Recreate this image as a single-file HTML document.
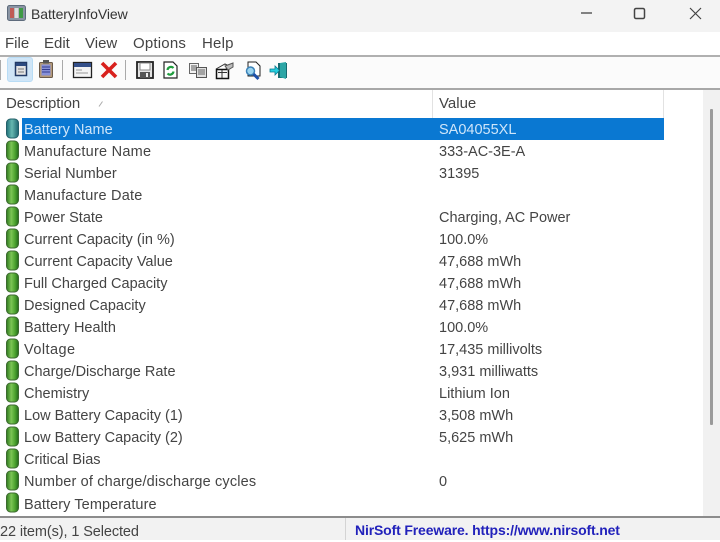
<!DOCTYPE html>
<html><head><meta charset="utf-8"><style>
*{box-sizing:border-box}
html,body{margin:0;padding:0}
body{width:720px;height:540px;position:relative;overflow:hidden;background:#fff;font-family:"Liberation Sans",sans-serif;color:#444;font-size:14.500px}
.a{position:absolute;white-space:nowrap}
.t{line-height:22px}
.m{top:35px;line-height:18px;font-size:15px;letter-spacing:.2px;color:#444}
svg{position:absolute;overflow:visible}
</style></head><body>
<div class="a" style="left:0;top:0;width:720px;height:32px;background:#f3f3f3"></div>
<svg style="left:7px;top:5px" width="19" height="16"><rect x=".5" y=".5" width="18" height="15" rx="2" fill="#8a94a3" stroke="#5e6b7c"/><rect x="3" y="3" width="4" height="10" fill="#c05a55"/><rect x="7.500" y="3" width="4" height="10" fill="#ddd"/><rect x="12" y="3" width="4" height="10" fill="#3f9a45"/></svg>
<div class="a" style="left:31px;top:5px;line-height:18px;font-size:14px;letter-spacing:-.08px;color:#333">BatteryInfoView</div>
<svg style="left:580px;top:8px" width="130" height="12" fill="none" stroke="#444"><path d="M1 5H12" stroke-width="1.300"/><rect x="54.500" y=".5" width="10" height="10" rx="1.500" stroke-width="1.500"/><path d="M110 0L121 11M121 0L110 11" stroke-width="1.200"/></svg>

<div class="a m" style="left:5px;letter-spacing:0">File</div>
<div class="a m" style="left:44px;letter-spacing:0">Edit</div>
<div class="a m" style="left:85px;letter-spacing:0">View</div>
<div class="a m" style="left:133px">Options</div>
<div class="a m" style="left:202px">Help</div>
<div class="a" style="left:0;top:55px;width:720px;height:2px;background:#b0b0b0"></div>
<div class="a" style="left:0;top:57px;width:720px;height:31px;background:#fbfbfb"></div>
<div class="a" style="left:0;top:88px;width:720px;height:2px;background:#a8a8a8"></div>

<div class="a" style="left:0;top:60px;width:1px;height:20px;background:#aaa"></div>
<div class="a" style="left:7px;top:57px;width:26px;height:25px;background:#cfe5f7;border:1px solid #b8dcf5;border-radius:3px"></div>
<svg style="left:15px;top:62px" width="11" height="15"><rect x=".5" y=".5" width="11" height="13" fill="#e4e4e4" stroke="#223a66" stroke-width="1.500"/><rect x="1" y="1" width="10" height="3" fill="#2c4a80"/><path d="M3 7H9M3 10H9" stroke="#777"/></svg>
<svg style="left:39px;top:60px" width="14" height="19"><rect x=".5" y="2.500" width="13" height="15" rx="1" fill="#b49a78" stroke="#6a5a4a"/><rect x="2.500" y="4.500" width="9" height="11" fill="#8790d8"/><path d="M3 7H11M3 9.500H11M3 12H11" stroke="#333c90"/><rect x="4" y="0" width="6" height="3.500" fill="#555"/></svg>
<div class="a" style="left:62px;top:60px;width:1px;height:20px;background:#aaa"></div>
<svg style="left:73px;top:62px" width="18" height="16"><rect x=".5" y=".5" width="18" height="15" fill="#f4f4f4" stroke="#222" stroke-width="1.300"/><rect x="1" y="1" width="17" height="4" fill="#34508a"/><path d="M3 8H9M3 11H15" stroke="#999"/></svg>
<svg style="left:100px;top:61px" width="18" height="18"><path d="M2 2L16 16M16 2L2 16" stroke="#d8201c" stroke-width="3.600"/></svg>
<div class="a" style="left:125px;top:60px;width:1px;height:20px;background:#aaa"></div>
<svg style="left:136px;top:61px" width="18" height="18"><rect x="1" y="1" width="16" height="16" fill="#e4e4e4" stroke="#222" stroke-width="1.800"/><rect x="4" y="2" width="10" height="7" fill="#fff" stroke="#888"/><rect x="4" y="11" width="10" height="6" fill="#555"/><rect x="10" y="12" width="2" height="4" fill="#eee"/></svg>
<svg style="left:163px;top:61px" width="15" height="18"><path d="M1 1H10L14 5V17H1Z" fill="#fff" stroke="#222" stroke-width="1.200"/><path d="M4.500 9A3.500 3.500 0 0 1 10.500 7M10.500 10.500A3.500 3.500 0 0 1 4.500 12.500" fill="none" stroke="#1f9e3e" stroke-width="2.200"/></svg>
<svg style="left:189px;top:63px" width="18" height="15"><rect x=".5" y=".5" width="9" height="10" fill="#f3f3f3" stroke="#666"/><path d="M2 3H8M2 5H8M2 7H8" stroke="#555"/><rect x="7.500" y="4.500" width="10" height="10" fill="#e0e0e0" stroke="#555"/><path d="M9 7H16M9 9H16M9 11H16" stroke="#666"/></svg>
<svg style="left:215px;top:62px" width="19" height="17"><path d="M1 7L10 2L14 4L9 9" fill="#fff" stroke="#333"/><rect x="1.500" y="7.500" width="12" height="9" fill="#f6f6f6" stroke="#111" stroke-width="1.500"/><path d="M3 10.500H12M7 8V16" stroke="#333"/><path d="M10 4L18 1V5L13 8Z" fill="#bbb" stroke="#555"/></svg>
<svg style="left:244px;top:61px" width="18" height="19"><path d="M4 1H12L16 5V15H4Z" fill="#fff" stroke="#222"/><circle cx="6.500" cy="10" r="4" fill="#9bd4ef" stroke="#3c82b8" stroke-width="1.500"/><path d="M9.500 13L14.500 18" stroke="#1d4fa8" stroke-width="3"/></svg>
<svg style="left:269px;top:61px" width="19" height="19"><path d="M9 2H18V17H9Z" fill="#176a70"/><path d="M11 2L17 1V18L11 16Z" fill="#2ca6a6"/><path d="M1 8H6V5L10.500 9.500L6 14V11H1Z" fill="#25d0e0" stroke="#0a7a90" stroke-width=".8"/></svg>

<div class="a t" style="left:6px;top:93px;font-size:15px;letter-spacing:-.08px">Description</div>
<svg style="left:98px;top:100px" width="6" height="8"><path d="M1 6.500L4.500 1.500" stroke="#aaa" stroke-width="1"/></svg>
<div class="a t" style="left:439px;top:93px;font-size:15px">Value</div>
<div class="a" style="left:432px;top:90px;width:1px;height:28px;background:#e2e2e2"></div>
<div class="a" style="left:663px;top:90px;width:1px;height:28px;background:#e2e2e2"></div>

<div class="a" style="left:22px;top:118px;width:642px;height:22px;background:#0a78d2"></div>
<div class="a" style="left:703px;top:90px;width:17px;height:426px;background:#f1f1f1"></div>
<div class="a" style="left:710px;top:109px;width:3px;height:316px;background:#9a9a9a;border-radius:1px"></div>

<svg style="left:0;top:118px" width="20" height="398">
<defs><linearGradient id="g"><stop offset="0" stop-color="#2f7a1e"/><stop offset=".4" stop-color="#7cc455"/><stop offset=".7" stop-color="#4ea52f"/><stop offset="1" stop-color="#23691a"/></linearGradient><linearGradient id="h"><stop offset="0" stop-color="#1f6f78"/><stop offset=".45" stop-color="#66b8b0"/><stop offset="1" stop-color="#1d6470"/></linearGradient></defs>
<rect x="6.500" y="1" width="12" height="19" rx="4" fill="url(#h)" stroke="#24606a"/>
<rect x="6.500" y="23" width="12" height="19" rx="4" fill="url(#g)" stroke="#3d6a30"/>
<rect x="6.500" y="45" width="12" height="19" rx="4" fill="url(#g)" stroke="#3d6a30"/>
<rect x="6.500" y="67" width="12" height="19" rx="4" fill="url(#g)" stroke="#3d6a30"/>
<rect x="6.500" y="89" width="12" height="19" rx="4" fill="url(#g)" stroke="#3d6a30"/>
<rect x="6.500" y="111" width="12" height="19" rx="4" fill="url(#g)" stroke="#3d6a30"/>
<rect x="6.500" y="133" width="12" height="19" rx="4" fill="url(#g)" stroke="#3d6a30"/>
<rect x="6.500" y="155" width="12" height="19" rx="4" fill="url(#g)" stroke="#3d6a30"/>
<rect x="6.500" y="177" width="12" height="19" rx="4" fill="url(#g)" stroke="#3d6a30"/>
<rect x="6.500" y="199" width="12" height="19" rx="4" fill="url(#g)" stroke="#3d6a30"/>
<rect x="6.500" y="221" width="12" height="19" rx="4" fill="url(#g)" stroke="#3d6a30"/>
<rect x="6.500" y="243" width="12" height="19" rx="4" fill="url(#g)" stroke="#3d6a30"/>
<rect x="6.500" y="265" width="12" height="19" rx="4" fill="url(#g)" stroke="#3d6a30"/>
<rect x="6.500" y="287" width="12" height="19" rx="4" fill="url(#g)" stroke="#3d6a30"/>
<rect x="6.500" y="309" width="12" height="19" rx="4" fill="url(#g)" stroke="#3d6a30"/>
<rect x="6.500" y="331" width="12" height="19" rx="4" fill="url(#g)" stroke="#3d6a30"/>
<rect x="6.500" y="353" width="12" height="19" rx="4" fill="url(#g)" stroke="#3d6a30"/>
<rect x="6.500" y="375" width="12" height="19" rx="4" fill="url(#g)" stroke="#3d6a30"/>
</svg>

<div class="a t" style="left:24px;top:119px;color:#cfe6fa">Battery Name</div><div class="a t" style="left:439px;top:119px;color:#cfe6fa">SA04055XL</div>
<div class="a t" style="left:24px;top:141px;letter-spacing:.25px">Manufacture Name</div><div class="a t" style="left:439px;top:141px">333-AC-3E-A</div>
<div class="a t" style="left:24px;top:163px">Serial Number</div><div class="a t" style="left:439px;top:163px">31395</div>
<div class="a t" style="left:24px;top:185px;letter-spacing:.2px">Manufacture Date</div>
<div class="a t" style="left:24px;top:207px">Power State</div><div class="a t" style="left:439px;top:207px">Charging, AC Power</div>
<div class="a t" style="left:24px;top:229px">Current Capacity (in %)</div><div class="a t" style="left:439px;top:229px">100.0%</div>
<div class="a t" style="left:24px;top:251px">Current Capacity Value</div><div class="a t" style="left:439px;top:251px">47,688 mWh</div>
<div class="a t" style="left:24px;top:273px">Full Charged Capacity</div><div class="a t" style="left:439px;top:273px">47,688 mWh</div>
<div class="a t" style="left:24px;top:295px">Designed Capacity</div><div class="a t" style="left:439px;top:295px">47,688 mWh</div>
<div class="a t" style="left:24px;top:317px">Battery Health</div><div class="a t" style="left:439px;top:317px">100.0%</div>
<div class="a t" style="left:24px;top:339px;letter-spacing:.45px">Voltage</div><div class="a t" style="left:439px;top:339px">17,435 millivolts</div>
<div class="a t" style="left:24px;top:361px">Charge/Discharge Rate</div><div class="a t" style="left:439px;top:361px">3,931 milliwatts</div>
<div class="a t" style="left:24px;top:383px">Chemistry</div><div class="a t" style="left:439px;top:383px">Lithium Ion</div>
<div class="a t" style="left:24px;top:405px">Low Battery Capacity (1)</div><div class="a t" style="left:439px;top:405px">3,508 mWh</div>
<div class="a t" style="left:24px;top:427px">Low Battery Capacity (2)</div><div class="a t" style="left:439px;top:427px">5,625 mWh</div>
<div class="a t" style="left:24px;top:449px">Critical Bias</div>
<div class="a t" style="left:24px;top:471px;letter-spacing:.15px">Number of charge/discharge cycles</div><div class="a t" style="left:439px;top:471px">0</div>
<div class="a t" style="left:24px;top:494px;letter-spacing:.08px">Battery Temperature</div>

<div class="a" style="left:0;top:516px;width:720px;height:24px;background:#f2f2f2;border-top:2px solid #8c8c8c"></div>
<div class="a" style="left:345px;top:518px;width:1px;height:22px;background:#d4d4d4"></div>
<div class="a" style="left:0;top:522px;line-height:20px;font-size:14.500px;letter-spacing:-.1px">22 item(s), 1 Selected</div>
<div class="a" style="left:355px;top:521px;line-height:18px;font-size:14px;font-weight:bold;color:#2222bb;letter-spacing:-.15px">NirSoft Freeware. https://www.nirsoft.net</div>
</body></html>
